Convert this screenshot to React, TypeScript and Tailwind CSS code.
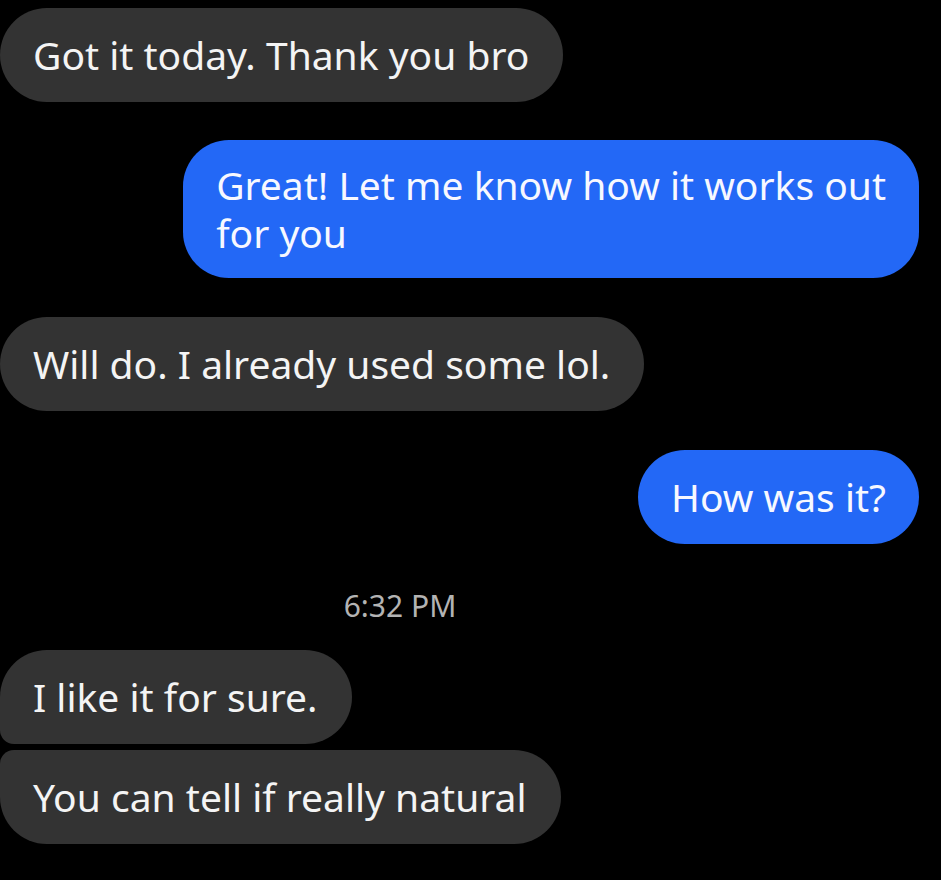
import React from "react";

type Shape = "first" | "last" | "single";

function Incoming({ text, shape = "single" }: { text: string; shape?: Shape }) {
  const corners =
    shape === "first"
      ? "rounded-[47px] rounded-bl-[14px]"
      : shape === "last"
      ? "rounded-[47px] rounded-tl-[14px]"
      : "rounded-[47px]";
  return (
    <div className="flex justify-start">
      <div className={`bg-[#333333] ${corners} h-[94px] pl-[33px] pr-[34px] flex items-center text-[#f4f4f4] whitespace-nowrap`}>
        {text}
      </div>
    </div>
  );
}

function Outgoing({ lines }: { lines: string[] }) {
  const multi = lines.length > 1;
  return (
    <div className="flex justify-end pr-[22px]">
      <div
        className={`bg-[#2368f6] text-[#f7f8ff] px-[33px] whitespace-nowrap ${
          multi ? "rounded-[46px] py-[21px] leading-[48px]" : "rounded-[47px] h-[94px] flex items-center"
        }`}
      >
        {lines.map((l, i) => (
          <div key={i}>{l}</div>
        ))}
      </div>
    </div>
  );
}

export default function App() {
  return (
    <div
      className="w-[941px] h-[880px] bg-black overflow-hidden text-[39px] pt-[8px]"
      style={{ fontFamily: '"Noto Sans", "Open Sans", sans-serif' }}
    >
      <div className="flex flex-col">
        <Incoming text="Got it today. Thank you bro" />
        <div className="h-[38px]" />
        <Outgoing lines={["Great! Let me know how it works out", "for you"]} />
        <div className="h-[39px]" />
        <Incoming text="Will do. I already used some lol." />
        <div className="h-[39px]" />
        <Outgoing lines={["How was it?"]} />
        <div className="h-[43px]" />
        <div className="text-center text-[30px] text-[#b3b3b3] pr-[141px] leading-[38px]">6:32 PM</div>
        <div className="h-[25px]" />
        <Incoming text="I like it for sure." shape="first" />
        <div className="h-[6px]" />
        <Incoming text="You can tell if really natural" shape="last" />
      </div>
    </div>
  );
}
